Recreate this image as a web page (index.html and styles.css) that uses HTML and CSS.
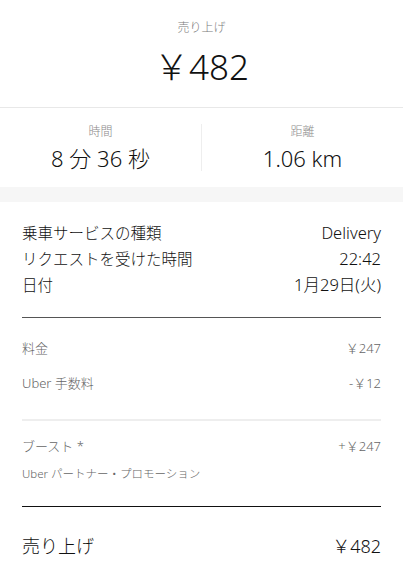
FILE: index.html
```html
<!DOCTYPE html>
<html lang="ja">
<head>
    <meta charset="UTF-8">
    <meta name="viewport" content="width=device-width, initial-scale=1.0">
    <title>売り上げ</title>
    <link rel="stylesheet" href="styles.css">
</head>
<body>
    <div class="hero">
        <div class="hero-label">売り上げ</div>
        <div class="hero-amount">￥482</div>
    </div>
    <div class="stats">
        <div class="stat">
            <div class="stat-label">時間</div>
            <div class="stat-value">8 分 36 秒</div>
        </div>
        <div class="stat">
            <div class="stat-label">距離</div>
            <div class="stat-value">1.06 km</div>
        </div>
    </div>
    <div class="band"></div>
    <div class="details">
        <div class="info">
            <div class="row"><span>乗車サービスの種類</span><span class="value">Delivery</span></div>
            <div class="row"><span>リクエストを受けた時間</span><span class="value">22:42</span></div>
            <div class="row"><span>日付</span><span class="value">1月29日(火)</span></div>
        </div>
        <div class="fees">
            <div class="row"><span>料金</span><span>￥247</span></div>
            <div class="row"><span>Uber 手数料</span><span>-￥12</span></div>
        </div>
        <div class="boost">
            <div class="row"><span>ブースト *</span><span>+￥247</span></div>
            <div class="boost-note">Uber パートナー・プロモーション</div>
        </div>
        <div class="total">
            <div class="row"><span>売り上げ</span><span>￥482</span></div>
        </div>
    </div>
</body>
</html>
```

FILE: styles.css
```css
body {
    margin: 0;
    font-family: "Noto Sans", "Noto Sans CJK JP", sans-serif;
    font-weight: 300;
    background-color: #ffffff;
    color: #111111;
}
.hero {
    padding: 20px 0 18px;
    text-align: center;
}
.hero-label {
    font-size: 12px;
    line-height: 16px;
    color: #7a7a7a;
}
.hero-amount {
    margin-top: 9px;
    font-size: 35px;
    line-height: 44px;
}
.stats {
    display: flex;
    border-top: 1px solid #e8e8e8;
    padding: 16px 0;
}
.stat {
    flex: 1;
    text-align: center;
}
.stat:first-child {
    border-right: 1px solid #eeeeee;
}
.stat-label {
    font-size: 12px;
    line-height: 16px;
    color: #8a8a8a;
}
.stat-value {
    margin-top: 5px;
    font-size: 22px;
    line-height: 26px;
}
.band {
    height: 15px;
    background-color: #f6f6f6;
}
.details {
    padding: 0 22px;
}
.row {
    display: flex;
    justify-content: space-between;
    align-items: baseline;
}
.info {
    padding: 18px 0 19px;
    border-bottom: 1px solid #555555;
}
.info .row {
    font-size: 15.5px;
    line-height: 26px;
}
.info .value {
    font-size: 16.5px;
}
.fees {
    padding: 20px 0 26px;
    border-bottom: 2px solid #eeeeee;
    color: #666666;
}
.fees .row {
    font-size: 13px;
    line-height: 20px;
}
.fees .row + .row {
    margin-top: 15px;
}
.boost {
    padding: 15px 0 24px;
    border-bottom: 1px solid #111111;
    color: #666666;
}
.boost .row {
    font-size: 13px;
    line-height: 20px;
}
.boost-note {
    margin-top: 10px;
    font-size: 11.5px;
    line-height: 16px;
}
.total {
    padding-top: 26px;
}
.total .row {
    font-size: 18px;
    line-height: 26px;
}
```
